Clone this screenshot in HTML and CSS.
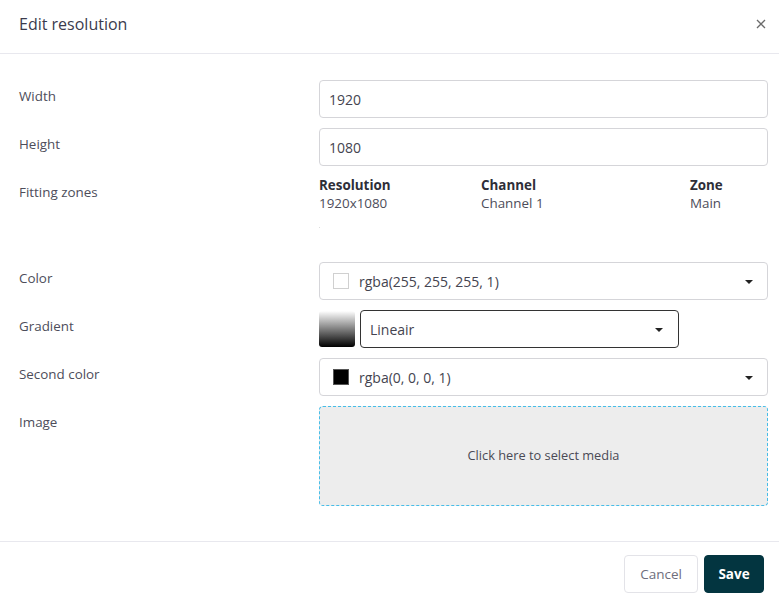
FILE: index.html
```html
<!DOCTYPE html>
<html>
<head>
<meta charset="utf-8">
<link rel="stylesheet" href="styles.css">
</head>
<body>
<div class="dialog">
  <div class="header">
    <div class="title">Edit resolution</div>
    <div class="close">
      <svg width="10" height="10" viewBox="0 0 10 10"><path d="M1 1L9 9M9 1L1 9" stroke="#6b6b6b" stroke-width="1.3"/></svg>
    </div>
  </div>
  <div class="body">
    <div class="row">
      <div class="label">Width</div>
      <div class="field input">1920</div>
    </div>
    <div class="row">
      <div class="label">Height</div>
      <div class="field input">1080</div>
    </div>
    <div class="row">
      <div class="label">Fitting zones</div>
      <div class="zones">
        <div class="zh">Resolution</div>
        <div class="zh">Channel</div>
        <div class="zh">Zone</div>
        <div class="zv">1920x1080</div>
        <div class="zv">Channel 1</div>
        <div class="zv">Main</div>
        <div class="zempty"><span class="dot"></span></div>
      </div>
    </div>
    <div class="row">
      <div class="label">Color</div>
      <div class="field select">
        <span class="swatch white"></span>
        <span class="val">rgba(255, 255, 255, 1)</span>
        <span class="caret"></span>
      </div>
    </div>
    <div class="row">
      <div class="label">Gradient</div>
      <div class="gradrow">
        <span class="gradswatch"></span>
        <div class="field select dark">
          <span class="val">Lineair</span>
          <span class="caret"></span>
        </div>
      </div>
    </div>
    <div class="row">
      <div class="label">Second color</div>
      <div class="field select">
        <span class="swatch black"></span>
        <span class="val">rgba(0, 0, 0, 1)</span>
        <span class="caret"></span>
      </div>
    </div>
    <div class="row">
      <div class="label">Image</div>
      <div class="drop">Click here to select media</div>
    </div>
  </div>
  <div class="footer">
    <button class="btn cancel">Cancel</button>
    <button class="btn save">Save</button>
  </div>
</div>
</body>
</html>
```

FILE: styles.css
```css
* { box-sizing: border-box; }
html, body { margin: 0; padding: 0; background: #fff; }
body {
  font-family: "Open Sans", "DejaVu Sans", sans-serif;
  color: #4a4a58;
  width: 779px;
  height: 601px;
  overflow: hidden;
}
.dialog { width: 779px; height: 601px; display: flex; flex-direction: column; }
.header {
  height: 54px;
  border-bottom: 1px solid #e8e8ee;
  display: flex;
  align-items: flex-start;
  justify-content: space-between;
  padding: 13px 13px 0 19px;
}
.title { font-size: 16px; line-height: 22px; color: #3b3b4d; }
.close { width: 10px; height: 10px; display: flex; margin-top: 6px; }
.body {
  padding: 26px 11px 0 19px;
  display: flex;
  flex-direction: column;
  gap: 10px;
  height: 488px;
  border-bottom: 1px solid #e8e8ee;
}
.row { display: grid; grid-template-columns: 300px 449px; }
.label { font-size: 13.4px; color: #4d4d5a; padding-top: 7px; line-height: 18px; }
.field {
  height: 38px;
  border: 1px solid #d5d5d9;
  border-radius: 4px;
  display: flex;
  align-items: center;
  font-size: 14px;
  color: #444450;
}
.input { padding-left: 9px; }
.select { padding: 0 14px 0 13px; }
.swatch { width: 16px; height: 16px; border: 1px solid #d0d0d0; margin-right: 10px; flex: none; }
.swatch.white { background: #fff; }
.swatch.black { background: #000; border-color: #555; }
.val { flex: 1; }
.caret {
  width: 0; height: 0;
  border-left: 4px solid transparent;
  border-right: 4px solid transparent;
  border-top: 4px solid #222;
  margin-top: 1px;
}
.gradrow { display: flex; align-items: center; gap: 5px; }
.gradswatch {
  width: 36px; height: 36px; border-radius: 3px;
  background: linear-gradient(to bottom, #ffffff, #000000);
  flex: none;
}
.select.dark { width: 319px; border-color: #333; padding-left: 9px; padding-right: 15px; }
.zones {
  display: grid;
  grid-template-columns: 162px 209px 1fr;
  height: 76px;
  align-content: start;
}
.zh { font-size: 13.4px; font-weight: 700; color: #2e2e38; line-height: 18px; }
.zv { font-size: 13.4px; color: #4d4d5a; line-height: 20px; margin-top: -1px; }
.zempty { grid-column: 1 / 4; height: 22px; position: relative; }
.dot { position: absolute; left: 0; top: 14px; width: 1px; height: 1px; background: #ddd; }
.drop {
  height: 100px;
  background: #ededed;
  border: 1px dashed #46bde8;
  border-radius: 4px;
  display: flex;
  align-items: center;
  justify-content: center;
  font-size: 12.8px;
  color: #4a4a55;
  padding-bottom: 2px;
}
.footer {
  display: flex;
  justify-content: flex-end;
  gap: 6px;
  padding: 13px 15px 0 0;
}
.btn {
  height: 38px;
  border-radius: 4px;
  font-family: inherit;
  font-size: 13.5px;
  padding: 0 13px;
  cursor: pointer;
}
.cancel { background: #fff; border: 1px solid #e3e3e8; color: #6e6e7c; width: 74px; }
.save { background: #033540; border: 1px solid #033540; color: #fff; font-weight: 700; width: 60px; }
```
